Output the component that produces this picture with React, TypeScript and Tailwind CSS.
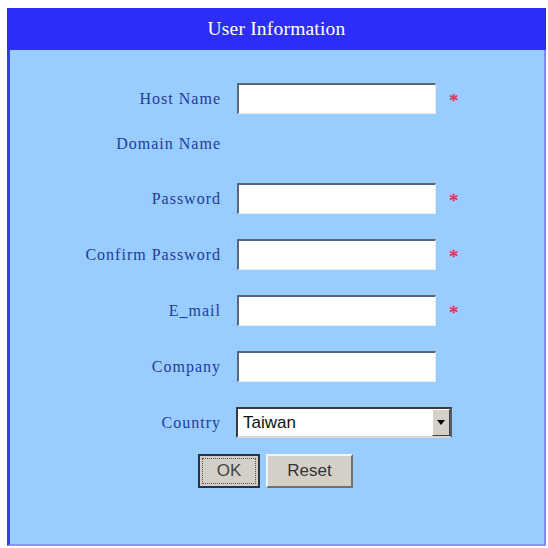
import React from 'react';

const serif = "font-['Liberation_Serif','Times_New_Roman',serif]";
const sans = "font-['Liberation_Sans',Arial,sans-serif]";

function Field({ label, required }: { label: string; required?: boolean }) {
  return (
    <div className="flex h-[31px] items-center">
      <label className={`w-[211px] text-right text-[16px] tracking-[1px] text-[#1f3c96] ${serif}`}>
        {label}
      </label>
      <input
        type={label.includes('Password') ? 'password' : 'text'}
        className="ml-[16px] h-[31px] w-[199px] border-t-[2px] border-l-[2px] border-b border-r border-t-[#58687a] border-l-[#58687a] border-b-[#e4ecf4] border-r-[#e4ecf4] bg-white px-1 outline-none"
      />
      {required && (
        <span className={`ml-[13px] mt-[3px] text-[19px] font-bold leading-none text-[#e0304e] ${serif}`}>*</span>
      )}
    </div>
  );
}

export default function App() {
  return (
    <div className="h-[548px] w-[548px] bg-white pl-[7px] pt-[8px]">
      <div className="flex h-[538px] w-[539px] flex-col border-l-[3px] border-r-[2px] border-b-[2px] border-l-[#2f3fe0] border-r-[#7c8ce8] border-b-[#8a96ec] bg-[#99ccff]">
        <div className="-ml-[3px] flex h-[42px] w-[539px] items-center justify-center bg-[#2d2df8]">
          <span className={`text-[19.5px] tracking-[0.2px] text-white ${serif}`}>User Information</span>
        </div>

        <div className="flex flex-col pt-[33px]">
          <Field label="Host Name" required />
          <div className="mt-[14px] mb-[24px] flex h-[31px] items-center">
            <span className={`w-[211px] text-right text-[16px] tracking-[1px] text-[#1f3c96] ${serif}`}>
              Domain Name
            </span>
          </div>
          <div className="flex flex-col gap-[25px]">
            <Field label="Password" required />
            <Field label="Confirm Password" required />
            <Field label="E_mail" required />
            <Field label="Company" />
            <div className="flex h-[31px] items-center">
              <label className={`w-[211px] text-right text-[16px] tracking-[1px] text-[#1f3c96] ${serif}`}>
                Country
              </label>
              <div className="relative ml-[15px] h-[31px] w-[216px]">
                <select
                  defaultValue="Taiwan"
                  className={`h-full w-full appearance-none border-[2px] border-t-[#3a3a3a] border-l-[#3a3a3a] border-b-[#d8d8d8] border-r-[#5a5a5a] bg-white pl-[5px] text-[17px] text-[#111] outline-none ${sans}`}
                >
                  <option>Taiwan</option>
                  <option>Japan</option>
                  <option>USA</option>
                </select>
                <div className="pointer-events-none absolute right-[2px] top-[2px] flex h-[27px] w-[18px] items-center justify-center border border-t-white border-l-white border-b-[#404040] border-r-[#404040] bg-[#d4d0c8]">
                  <svg width="8" height="5" viewBox="0 0 8 5">
                    <path d="M0 0H8L4 5Z" fill="#000" />
                  </svg>
                </div>
              </div>
            </div>
          </div>

          <div className="mt-[16px] flex justify-center gap-[6px] pr-[3px]">
            <button
              className={`flex h-[34px] w-[62px] items-center justify-center border-[2px] border-[#24344a] bg-[#d4d0c8] text-[17px] text-[#444] ${sans}`}
            >
              <span className="flex h-[26px] w-[54px] items-center justify-center border border-dotted border-[#555]">
                OK
              </span>
            </button>
            <button
              className={`h-[34px] w-[87px] border-[2px] border-t-[#f4f4f4] border-l-[#f4f4f4] border-b-[#707070] border-r-[#707070] bg-[#d4d0c8] text-[17px] text-[#333] ${sans}`}
            >
              Reset
            </button>
          </div>
        </div>
      </div>
    </div>
  );
}
